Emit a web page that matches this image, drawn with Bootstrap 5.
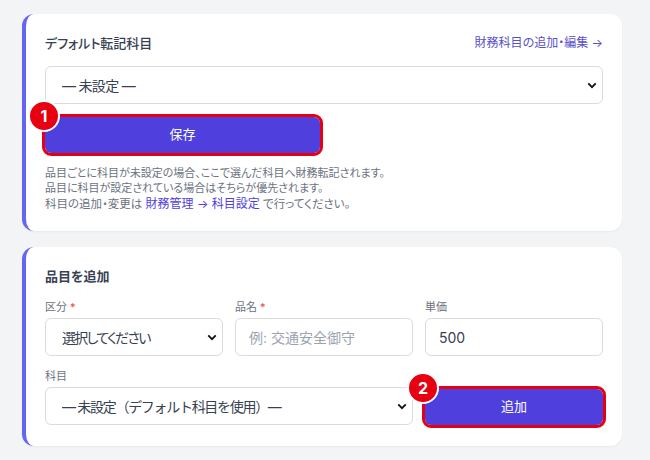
<!DOCTYPE html>
<html lang="ja">
<head>
<meta charset="utf-8">
<title>品目</title>
<link href="https://cdn.jsdelivr.net/npm/bootstrap@5.3.0/dist/css/bootstrap.min.css" rel="stylesheet">
<style>
html, body { height: 460px; overflow: hidden; }
body { background: #f3f4f6; font-family: Inter, "Noto Sans CJK JP", sans-serif; color: #374151; padding: 14px 28px 0 22px; font-feature-settings: "palt"; }
.panel { background: #fff; border: 0; border-left: 4px solid #6366f1; border-radius: 12px; padding: 19px 19px 0 19px; box-shadow: 0 1px 2px rgba(0,0,0,.05); }
.panel-a { height: 217px; margin-bottom: 16px; }
.panel-b { height: 199px; }
.panel-title { font-size: 13px; font-weight: 500; line-height: 20px; color: #374151; margin: 0; }
.panel-b .panel-title { font-weight: 600; margin-bottom: 13px; }
.side-link { font-size: 12px; color: #5a50c8; text-decoration: none; line-height: 20px; }
.field { border: 1px solid #d9dbe0; border-radius: 6px; color: #374151; font-size: 14px; height: 38px; padding: 0 14px 0 16px; box-shadow: none; background-color: #fff; font-feature-settings: "palt"; }
.form-select.field { padding-right: 32px; color: #374151; background-image: url("data:image/svg+xml,%3Csvg xmlns='http://www.w3.org/2000/svg' viewBox='0 0 12 8'%3E%3Cpath d='M1.5 1.5 6 6l4.5-4.5' fill='none' stroke='%23111' stroke-width='2.2'/%3E%3C/svg%3E"); background-size: 10px 7px; background-position: right 5px center; }
.field::placeholder { color: #9ca3af; opacity: 1; }
.tight-a { letter-spacing: -.7px; }
.tight-b { letter-spacing: -1.7px; }
.tight-c { font-feature-settings: normal; letter-spacing: -1.3px; }
.anno-wrap { position: relative; }
.go-btn { background: #4f3fdc; border: 0; color: #fff; font-size: 13px; border-radius: 6px; height: 36px; width: 100%; outline: 3.5px solid #e60012; outline-offset: 0; }
.go-btn:hover { background: #4f3fdc; color: #fff; }
.num-dot { position: absolute; width: 32px; height: 32px; border-radius: 50%; background: #e60012; color: #fff; border: 2px solid #fff; font-size: 16px; font-weight: 700; display: flex; align-items: center; justify-content: center; line-height: 1; z-index: 2; }
.dot-a { left: -17px; top: -17px; }
.dot-b { left: -18px; top: -17px; }
.hint { font-size: 11px; line-height: 15.6px; color: #6b7280; margin: 12.5px 0 0; }
.hint-last { font-size: 11.5px; line-height: 1; }
.hint a { color: #4f3fdc; text-decoration: none; font-size: 12px; line-height: 1; }
.lbl { font-size: 11px; line-height: 16px; color: #6b7280; margin: 0 0 3px; display: block; }
.req { color: #ef4444; }
.form-cols { display: grid; grid-template-columns: 178px 178px 178px; column-gap: 12px; }
.form-cols2 { display: grid; grid-template-columns: 368px 178px; column-gap: 12px; margin-top: 12px; }
.top-row { margin-bottom: 13px; }
.save-w { width: 275px; margin-top: 13px; }
</style>
</head>
<body>
<section class="panel panel-a">
  <div class="d-flex justify-content-between align-items-center top-row">
    <h2 class="panel-title">デフォルト転記科目</h2>
    <a class="side-link" href="#">財務科目の追加・編集 →</a>
  </div>
  <select class="form-select field tight-a"><option>— 未設定 —</option></select>
  <div class="anno-wrap save-w">
    <span class="num-dot dot-a">1</span>
    <button type="button" class="btn go-btn">保存</button>
  </div>
  <p class="hint">品目ごとに科目が未設定の場合、ここで選んだ科目へ財務転記されます。<br>品目に科目が設定されている場合はそちらが優先されます。<br><span class="hint-last">科目の追加・変更は <a href="#">財務管理 → 科目設定</a> で行ってください。</span></p>
</section>
<section class="panel panel-b">
  <h2 class="panel-title">品目を追加</h2>
  <div class="form-cols">
    <div><label class="lbl">区分 <span class="req">*</span></label>
      <select class="form-select field tight-b"><option>選択してください</option></select></div>
    <div><label class="lbl">品名 <span class="req">*</span></label>
      <input class="form-control field" placeholder="例: 交通安全御守" style="padding-left:13px"></div>
    <div><label class="lbl">単価</label>
      <input class="form-control field" value="500" style="padding-left:13px"></div>
  </div>
  <div class="form-cols2">
    <div><label class="lbl">科目</label>
      <select class="form-select field tight-c"><option>— 未設定（デフォルト科目を使用）—</option></select></div>
    <div class="d-flex align-items-end">
      <div class="anno-wrap w-100">
        <span class="num-dot dot-b">2</span>
        <button type="button" class="btn go-btn">追加</button>
      </div>
    </div>
  </div>
</section>
<script src="https://cdn.jsdelivr.net/npm/bootstrap@5.3.0/dist/js/bootstrap.bundle.min.js"></script>
</body>
</html>
